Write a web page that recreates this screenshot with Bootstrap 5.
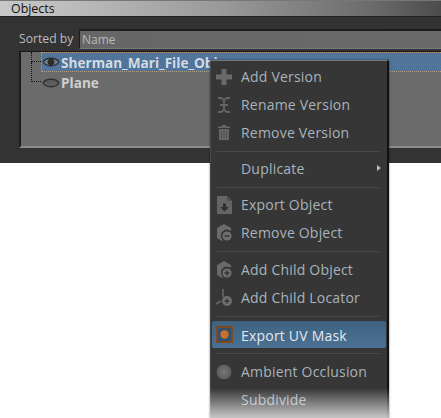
<!DOCTYPE html>
<html lang="en"><head><meta charset="utf-8">
<link href="https://cdn.jsdelivr.net/npm/bootstrap@5.3.0/dist/css/bootstrap.min.css" rel="stylesheet">
<style>
html,body{margin:0;height:418px;width:441px;overflow:hidden;background:#fff}
body{font-family:"Open Sans","Noto Sans",sans-serif;position:relative}
.panel-obj{height:163px;background:#333;border-top:1px solid #777}
.title-bar{height:15px;background:linear-gradient(90deg,#c8c8c8 0,#bdbdbd 15%,#9a9a9a 50%,#6a6a6a 85%,#4c4c4c 100%);border-bottom:1px solid #222;font-size:12.4px;line-height:15px;color:#111;padding-left:11px;box-sizing:content-box}
.sort-row{margin-top:12px;height:20px;padding-left:19px}
.sort-lab{font-size:12.2px;line-height:19px;color:#bdbdbd;width:60px}
.sort-box{height:20px;background:linear-gradient(90deg,#666,#6a6a6a);border:1px solid #1c1c1c;border-right:0;border-bottom-color:#7a7a7a;border-top-width:2px;font-size:12px;line-height:17px;color:#b8b8b8;padding-left:2px}
.tree-box{margin:2px 0 0 19px;height:97px;background:#6b6b6b;border:1px solid #1b1b1b;border-left-width:2px;border-right:0;border-bottom:2px solid #8a8a8a;position:relative}
.tree-row{height:20px;font-size:13.6px;font-weight:700;line-height:19px;color:#cfcfcf}
.tree-row.sel{background:#50749a;border:1px dotted #b99a78;border-right:0;height:20px;margin-left:20px;color:#d4dbe2}
.tree-row svg{margin-right:1px;flex:none}
.plain-row{margin:0 0 0 20px;padding-left:1px;height:21px}
.tline{position:absolute;border-left:1px dotted #111;border-bottom:1px dotted #111;left:10px;width:10px}
.tline-a{top:0;height:10px}
.tline-b{top:10px;height:20px}
.ctx-menu{position:absolute;left:210px;top:60px;width:179px;height:358px;background:#363636;border:1px solid #777;border-bottom:0;border-right:2px solid #111;border-left-color:#4a4a4a;padding-top:2px;box-shadow:0 0 2px rgba(0,0,0,.5)}
.ctx-menu::after{content:"";position:absolute;left:-1px;right:-2px;bottom:0;height:30px;background:linear-gradient(rgba(255,255,255,0),rgba(255,255,255,.72))}
.ctx-item{height:28px;padding-left:4px;font-size:14px;letter-spacing:.2px;color:#a7b3bd;line-height:28px;white-space:nowrap;position:relative}
.ctx-ico{width:20px;height:20px;margin-right:6px;flex:none}
.ctx-sep{height:1px;background:#4a4a4a;margin:4px 8px 3px 6px}
.ctx-sep.sep-wide{margin-bottom:4px}
.ctx-item.act{background:linear-gradient(#3f6280,#4b7193);color:#e2e8ee;border-radius:2px;margin:0 1px;padding-left:3px;height:27px;padding-top:2px}
.ctx-sep.after-act{margin-top:5px}
.caret-r{position:absolute;right:6px;top:10px;border-left:4px solid #bbb;border-top:3.5px solid transparent;border-bottom:3.5px solid transparent}
</style></head>
<body>
<div class="panel-obj">
  <div class="title-bar">Objects</div>
  <div class="sort-row d-flex"><div class="sort-lab">Sorted by</div><div class="sort-box flex-grow-1">Name</div></div>
  <div class="tree-box">
    <div class="tline tline-a"></div>
    <div class="tline tline-b"></div>
    <div class="tree-row sel d-flex align-items-center">
      <svg width="18" height="12" viewBox="0 0 18 12"><path d="M1 6C4 1 14 1 17 6C14 11 4 11 1 6Z" fill="#6d7d8c" stroke="#2e2e2e" stroke-width="1.300"/><circle cx="9" cy="6" r="3.300" fill="#2c2c2c"/></svg>
      <span>Sherman_Mari_File_Obj</span>
    </div>
    <div class="tree-row plain-row d-flex align-items-center">
      <svg width="18" height="12" viewBox="0 0 18 12"><path d="M1 6C4 1 14 1 17 6C14 11 4 11 1 6Z" fill="#5e5e5e" stroke="#2e2e2e" stroke-width="1.300"/></svg>
      <span>Plane</span>
    </div>
  </div>
</div>
<div class="ctx-menu">
  <div class="ctx-item d-flex align-items-center"><svg class="ctx-ico" viewBox="0 0 20 20"><path d="M6.500 2h5v5.500H17v5h-5.500V18h-5v-5.500H1v-5h5.500Z" fill="#6a6a6a"/></svg>Add Version</div>
  <div class="ctx-item d-flex align-items-center"><svg class="ctx-ico" viewBox="0 0 20 20"><path d="M3 3h3.500L9 5.500 11.500 3H15M3 17h3.500L9 14.500 11.500 17H15M9 5.500v9M5 10h8" fill="none" stroke="#636363" stroke-width="1.800"/></svg>Rename Version</div>
  <div class="ctx-item d-flex align-items-center"><svg class="ctx-ico" viewBox="0 0 20 20"><path d="M4 6h10v11H4ZM3 3.500h12v1.500H3ZM7 2h4v1.500H7Z" fill="#666"/><path d="M6.500 7.500v8M9 7.500v8M11.500 7.500v8" stroke="#4a4a4a" stroke-width=".8"/></svg>Remove Version</div>
  <div class="ctx-sep"></div>
  <div class="ctx-item d-flex align-items-center"><span class="ctx-ico"></span>Duplicate<span class="caret-r"></span></div>
  <div class="ctx-sep"></div>
  <div class="ctx-item d-flex align-items-center"><svg class="ctx-ico" viewBox="0 0 20 20"><path d="M2 1h10l5 5v13H2Z" fill="#646464"/><path d="M12 1v5h5Z" fill="#505050"/><path d="M8 8.500h3v3.500h3l-4.500 4.500L5 12h3Z" fill="#2e2e2e"/></svg>Export Object</div>
  <div class="ctx-item d-flex align-items-center"><svg class="ctx-ico" viewBox="0 0 20 20"><path d="M9 1l7 4v3a6 6 0 0 0-8 9l-1 1-5-3V5Z" fill="#6a6a6a"/><circle cx="12" cy="13" r="5.800" fill="#363636"/><circle cx="12" cy="13" r="4.600" fill="#6e6e6e"/><path d="M9.500 13h5" stroke="#333" stroke-width="1.500"/></svg>Remove Object</div>
  <div class="ctx-sep sep-wide"></div>
  <div class="ctx-item d-flex align-items-center"><svg class="ctx-ico" viewBox="0 0 20 20"><path d="M9 1l7 4v3a6 6 0 0 0-8 9l-1 1-5-3V5Z" fill="#6a6a6a"/><circle cx="12" cy="13" r="5.800" fill="#363636"/><circle cx="12" cy="13" r="4.600" fill="#6e6e6e"/><path d="M9.500 13h5M12 10.500v5" stroke="#333" stroke-width="1.300"/></svg>Add Child Object</div>
  <div class="ctx-item d-flex align-items-center"><svg class="ctx-ico" viewBox="0 0 20 20"><path d="M8 1v8M1 16l5-3" stroke="#666" stroke-width="1.600" fill="none"/><circle cx="12" cy="13" r="5" fill="#6e6e6e"/><path d="M9.500 13h5M12 10.500v5" stroke="#333" stroke-width="1.300"/></svg>Add Child Locator</div>
  <div class="ctx-sep sep-wide"></div>
  <div class="ctx-item act d-flex align-items-center"><svg class="ctx-ico" viewBox="0 0 20 20"><rect x="2" y="1" width="15" height="15" fill="#35506a" stroke="#7a4a24" stroke-width="2"/><circle cx="9.500" cy="8.500" r="4.200" fill="#c8702c"/></svg>Export UV Mask</div>
  <div class="ctx-sep after-act sep-wide"></div>
  <div class="ctx-item d-flex align-items-center"><svg class="ctx-ico" viewBox="0 0 20 20"><defs><radialGradient id="ambi"><stop offset="0" stop-color="#7a7a7a"/><stop offset="1" stop-color="#5a5a5a"/></radialGradient></defs><circle cx="9" cy="10" r="7.500" fill="url(#ambi)"/></svg>Ambient Occlusion</div>
  <div class="ctx-item d-flex align-items-center"><span class="ctx-ico"></span>Subdivide</div>
</div>
<script src="https://cdn.jsdelivr.net/npm/bootstrap@5.3.0/dist/js/bootstrap.bundle.min.js"></script>
</body></html>
